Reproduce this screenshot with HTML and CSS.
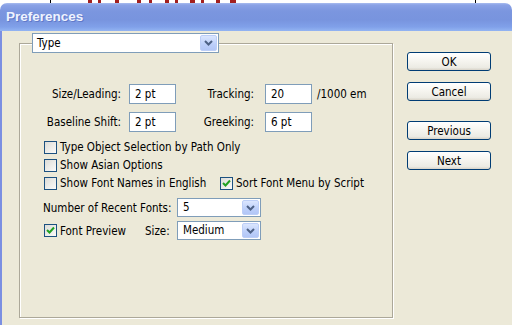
FILE: index.html
```html
<!DOCTYPE html>
<html>
<head>
    <title>Preferences</title>
    <link rel="stylesheet" href="styles.css">
</head>
<body>
    <div class="backdrop">
        <div class="backdrop-page">
            <span class="ink" style="margin-left: 37px; width: 4px;"></span>
            <span class="ink" style="margin-left: 6px; width: 3px;"></span>
            <span class="ink" style="margin-left: 14px; width: 4px;"></span>
            <span class="ink" style="margin-left: 18px; width: 4px;"></span>
            <span class="ink" style="margin-left: 8px; width: 3px;"></span>
            <span class="ink" style="margin-left: 13px; width: 4px;"></span>
            <span class="ink" style="margin-left: 6px; width: 3px;"></span>
            <span class="ink" style="margin-left: 12px; width: 5px;"></span>
            <span class="ink" style="margin-left: 6px; width: 3px;"></span>
            <span class="ink" style="margin-left: 12px; width: 4px;"></span>
            <span class="ink" style="margin-left: 10px; width: 6px;"></span>
        </div>
    </div>
    <div class="window">
        <div class="titlebar">Preferences</div>
        <div class="client">
            <fieldset class="group">
                <legend class="combo combo-section">
                    <span class="combo-value">Type</span>
                    <span class="combo-arrow"><svg width="9" height="6" viewBox="0 0 9 6"><path d="M1 1 L4.5 4.5 L8 1" fill="none" stroke="#4d6185" stroke-width="2"/></svg></span>
                </legend>
                <div class="group-body">
                    <div class="field-row first">
                        <span class="lbl lbl-a">Size/Leading:</span>
                        <span class="text-box">2 pt</span>
                        <span class="lbl lbl-b">Tracking:</span>
                        <span class="text-box">20</span>
                        <span class="unit">/1000 em</span>
                    </div>
                    <div class="field-row second">
                        <span class="lbl lbl-a">Baseline Shift:</span>
                        <span class="text-box">2 pt</span>
                        <span class="lbl lbl-b">Greeking:</span>
                        <span class="text-box">6 pt</span>
                    </div>

                    <div class="checks">
                        <div class="check-row">
                            <label class="check"><span class="box"></span>Type Object Selection by Path Only</label>
                        </div>
                        <div class="check-row">
                            <label class="check"><span class="box"></span>Show Asian Options</label>
                        </div>
                        <div class="check-row">
                            <label class="check check-fixed"><span class="box"></span>Show Font Names in English</label>
                            <label class="check"><span class="box checked"><svg width="11" height="11" viewBox="0 0 11 11"><path d="M2 5 L4.5 7.5 L9 2.5" fill="none" stroke="#21a121" stroke-width="2"/></svg></span>Sort Font Menu by Script</label>
                        </div>
                    </div>

                    <div class="select-row recent">
                        <span class="recent-lbl">Number of Recent Fonts:</span>
                        <div class="combo combo-small">
                            <span class="combo-value">5</span>
                            <span class="combo-arrow"><svg width="9" height="6" viewBox="0 0 9 6"><path d="M1 1 L4.5 4.5 L8 1" fill="none" stroke="#4d6185" stroke-width="2"/></svg></span>
                        </div>
                    </div>
                    <div class="select-row preview">
                        <label class="check check-preview"><span class="box checked"><svg width="11" height="11" viewBox="0 0 11 11"><path d="M2 5 L4.5 7.5 L9 2.5" fill="none" stroke="#21a121" stroke-width="2"/></svg></span>Font Preview</label>
                        <span class="size-lbl">Size:</span>
                        <div class="combo combo-small">
                            <span class="combo-value">Medium</span>
                            <span class="combo-arrow"><svg width="9" height="6" viewBox="0 0 9 6"><path d="M1 1 L4.5 4.5 L8 1" fill="none" stroke="#4d6185" stroke-width="2"/></svg></span>
                        </div>
                    </div>
                </div>
            </fieldset>

            <div class="buttons">
                <button class="btn">OK</button>
                <button class="btn">Cancel</button>
                <button class="btn btn-gap">Previous</button>
                <button class="btn">Next</button>
            </div>
        </div>
    </div>
</body>
</html>
```

FILE: styles.css
```css
html, body {
    margin: 0;
    height: 100%;
}
body {
    background-color: #fff;
    font-family: "DejaVu Sans Condensed", "DejaVu Sans", sans-serif;
    font-stretch: condensed;
    font-size: 11.5px;
    color: #000;
    overflow: hidden;
}
.backdrop {
    height: 3px;
    overflow: hidden;
    background-color: #fff;
}
.backdrop-page {
    display: flex;
    margin-left: 50px;
    width: 424px;
    height: 3px;
    border-left: 1px solid #000;
    border-right: 1px solid #000;
}
.ink {
    height: 3px;
    background-color: #a3201f;
}
.window {
    height: 322px;
}
.titlebar {
    height: 28px;
    line-height: 28px;
    padding-left: 6px;
    border-radius: 7px 7px 0 0;
    background: linear-gradient(to bottom, #a9bcef 0, #8aa2e6 2px, #7b96df 8px, #7894de 60%, #80a0e9 85%, #93b4f2 100%);
    font-family: "Liberation Sans", sans-serif;
    font-weight: bold;
    font-size: 13.5px;
    color: #eef3ff;
    text-shadow: 1px 1px 0 #6079c9;
}
.client {
    display: flex;
    height: 294px;
    background-color: #ece9d8;
    border-left: 2px solid #7b8fe2;
    padding-left: 17px;
}
.group {
    box-sizing: border-box;
    margin: 2px 0 0 0;
    width: 374px;
    height: 285px;
    min-width: 0;
    padding: 0 0 0 12px;
    border: 1px solid #aca899;
    box-shadow: 1px 1px 0 #fff, inset 1px 1px 0 #fff;
}
.combo {
    box-sizing: border-box;
    display: flex;
    align-items: stretch;
    background-color: #fff;
    border: 1px solid #7f9db9;
    padding: 1px;
}
.combo-section {
    width: 187px;
    height: 20px;
    margin: 0;
}
.combo-value {
    flex: 1;
    padding-left: 3px;
    line-height: 16px;
}
.combo-arrow {
    width: 17px;
    display: flex;
    align-items: center;
    justify-content: center;
    box-sizing: border-box;
    border: 1px solid #bccef7;
    border-radius: 2px;
    background: linear-gradient(to bottom, #dbe6fe, #bccffa 60%, #b2c6f6);
}
.group-body {
    padding-left: 12px;
}
.field-row {
    display: flex;
    align-items: center;
    height: 20px;
}
.field-row.first {
    margin-top: 31px;
}
.field-row.second {
    margin-top: 8px;
}
.lbl {
    text-align: right;
}
.lbl-a {
    width: 77px;
    margin-right: 8px;
}
.lbl-b {
    width: 78px;
    margin-right: 11px;
}
.text-box {
    box-sizing: border-box;
    width: 47px;
    height: 20px;
    line-height: 18px;
    padding-left: 5px;
    border: 1px solid #7f9db9;
    background-color: #fff;
}
.unit {
    margin-left: 5px;
}
.checks {
    margin-top: 6px;
}
.check-row {
    display: flex;
    align-items: center;
    height: 18px;
}
.check {
    display: flex;
    align-items: center;
}
.check-fixed {
    width: 176px;
}
.box {
    box-sizing: border-box;
    width: 13px;
    height: 13px;
    margin-right: 3px;
    border: 1px solid #1c5180;
    background: linear-gradient(135deg, #dcdcd7, #fbfbf9);
    display: flex;
    align-items: center;
    justify-content: center;
}
.select-row {
    display: flex;
    align-items: center;
    height: 19px;
}
.select-row.recent {
    margin-top: 6px;
}
.select-row.preview {
    margin-top: 4px;
}
.recent-lbl {
    width: 133px;
    margin-left: -1px;
    margin-right: 1px;
}
.check-preview {
    width: 101px;
}
.size-lbl {
    width: 32px;
}
.combo-small {
    width: 84px;
    height: 19px;
}
.combo-small .combo-value {
    line-height: 15px;
    padding-left: 4px;
}
.buttons {
    display: flex;
    flex-direction: column;
    margin: 21px 0 0 14px;
}
.btn {
    width: 84px;
    height: 19px;
    margin-bottom: 11px;
    padding: 0;
    border: 1px solid #003c74;
    border-radius: 3px;
    background: linear-gradient(to bottom, #fff 0, #f6f5f0 45%, #ecebe4 85%, #d8d3c8 100%);
    font-family: inherit;
    font-stretch: condensed;
    font-size: 11.5px;
    color: #000;
}
.btn-gap {
    margin-top: 9px;
}
```
